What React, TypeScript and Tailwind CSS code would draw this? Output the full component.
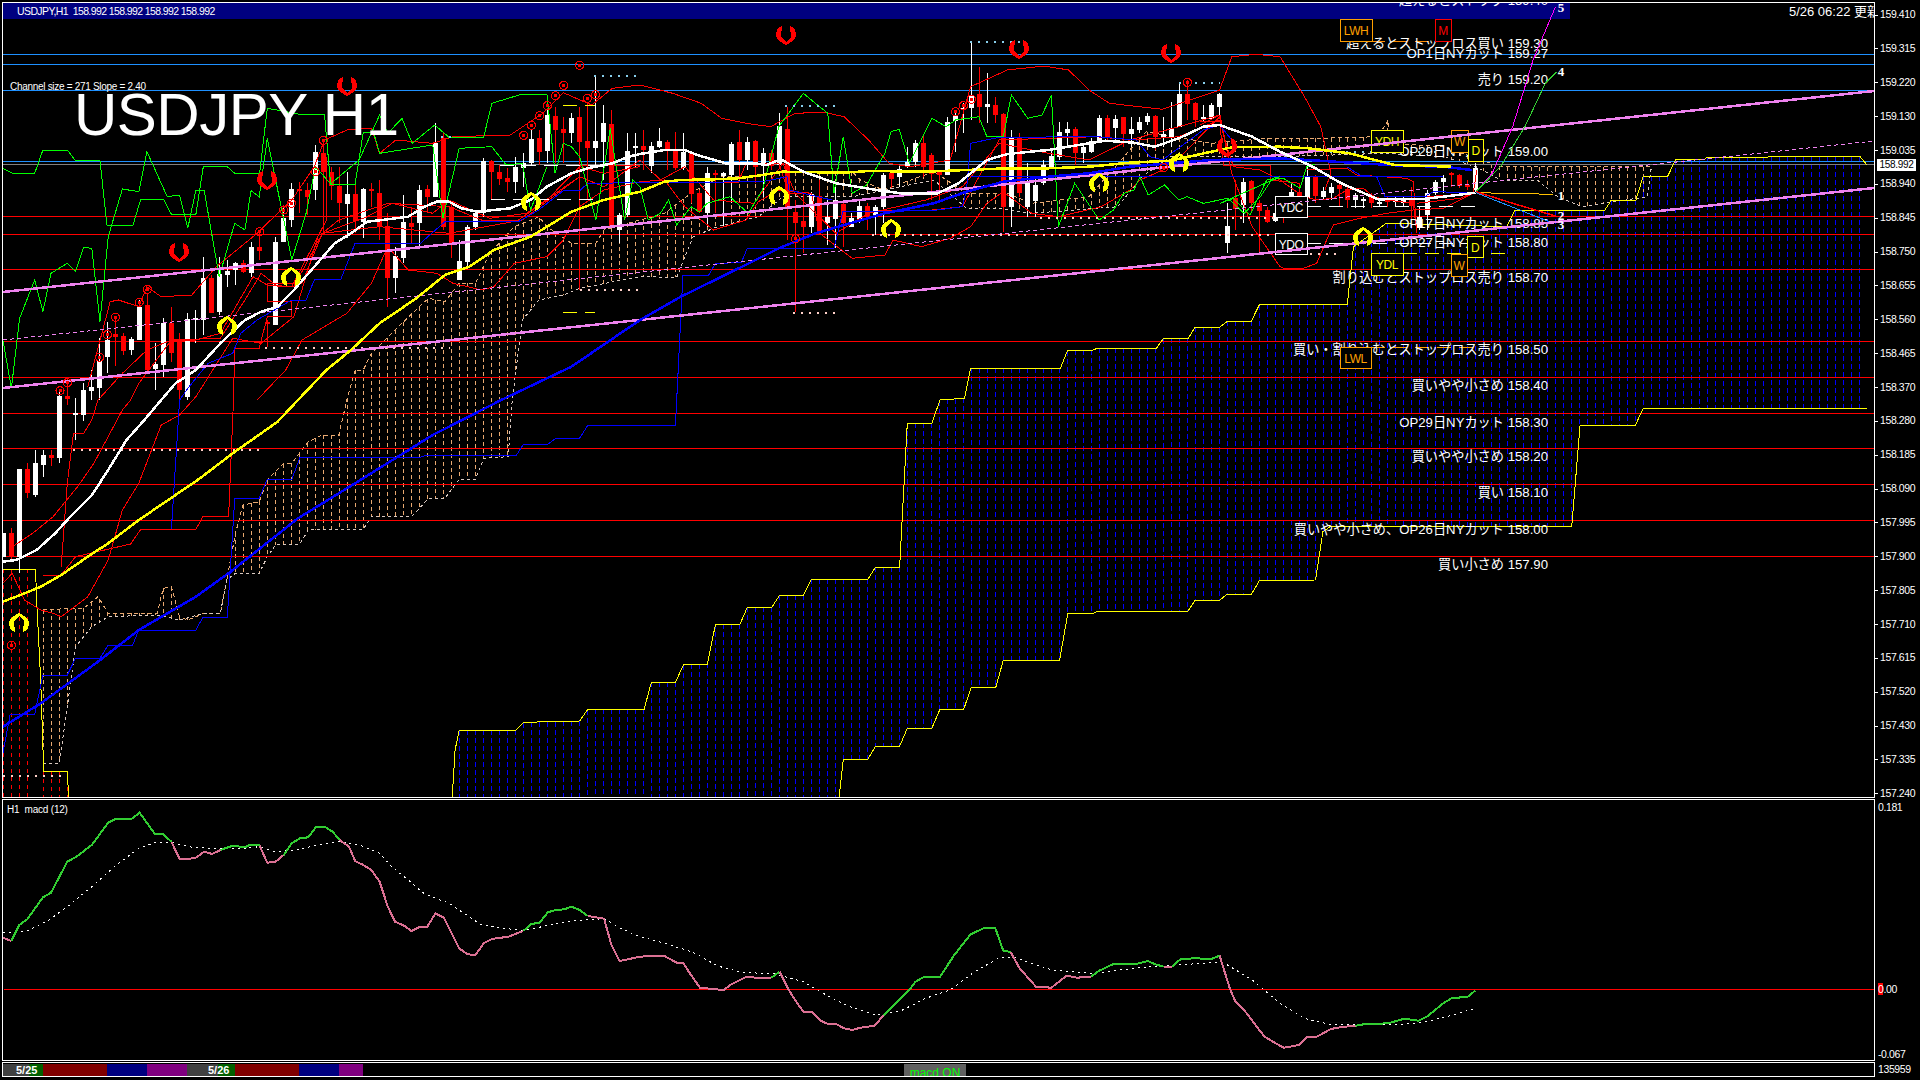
// App.tsx
const z = (ox: number, oy: number, s: string, sx = 2.45, sy = 3) =>
  s.trim().split(/\s+/).map((p) => {
    const [x, y] = p.split(',').map(Number)
    return `${(x / sx + ox).toFixed(1)},${(y / sy + oy).toFixed(1)}`
  }).join(' ')
const z9 = (s: string) => z(1200, 100, s, 3, 3)

const parse = (s: string) => s.split(' ').map((p) => p.split(',').map(Number))
const at = (pts: number[][], x: number) => {
  for (let i = 1; i < pts.length; i++) {
    if (x <= pts[i][0]) {
      const [a, b] = [pts[i - 1], pts[i]]
      return a[1] + ((b[1] - a[1]) * (x - a[0])) / Math.max(b[0] - a[0], 0.1)
    }
  }
  return pts[pts.length - 1][1]
}
const barX = (k: number) => 3.5 + 8 * k

// [red?, body top, body bottom, high, low] in 3x y units
const candles: number[][] = [
  [0,1600,1670,1600,1670],[1,1600,1672,1585,1680],[0,1407,1670,1407,1720],[1,1407,1480,1390,1495],[0,1390,1485,1350,1490],
  [0,1365,1395,1350,1430],[1,1365,1375,1350,1397],[0,1188,1375,1175,1390],[1,1188,1196,1130,1215],[0,1240,1246,1195,1320],
  [0,1170,1245,1150,1262],[0,1160,1172,1110,1200],[0,1082,1165,1015,1200],[0,1020,1070,965,1118],[1,1002,1010,950,1098],
  [1,1008,1052,1000,1065],[0,1018,1050,1010,1065],[0,920,1020,900,1020],[1,915,1110,880,1115],[0,1092,1108,1030,1170],
  [0,970,1095,955,1130],[1,970,1060,920,1085],[1,1022,1170,1000,1200],[0,958,1190,940,1200],[0,955,960,930,1030],
  [0,835,960,770,1005],[1,833,940,825,940],[0,822,935,770,945],[0,812,825,780,860],[0,790,810,785,855],
  [1,790,815,780,820],[0,740,820,725,830],[1,742,752,690,780],[1,965,970,960,1040],[0,725,975,710,975],
  [0,655,725,620,725],[0,568,660,550,680],[1,568,572,545,640],[1,570,592,550,645],[0,455,570,435,600],
  [1,460,515,430,700],[1,515,558,500,600],[1,558,610,500,670],[0,582,612,515,715],[1,582,662,555,700],
  [0,568,665,565,715],[1,568,572,550,620],[1,578,680,540,720],[1,678,835,640,920],[0,768,835,740,880],
  [0,665,775,585,790],[1,670,680,620,730],[0,570,670,555,740],[1,568,590,555,640],[0,430,590,370,590],
  [1,413,680,400,690],[1,620,728,610,775],[0,783,840,720,840],[0,680,785,675,800],[0,640,682,630,690],
  [0,483,640,475,650],[1,483,515,480,600],[1,515,538,495,555],[1,533,545,505,575],[0,500,545,470,580],
  [0,490,503,460,560],[0,417,490,390,495],[1,415,455,390,495],[0,345,452,330,490],[1,348,390,320,490],
  [1,388,398,350,490],[0,355,398,340,430],[1,352,425,320,870],[1,422,445,310,600],[0,423,445,225,500],
  [0,370,425,315,540],[1,372,680,330,680],[0,645,690,640,730],[0,452,645,400,650],[0,437,445,400,500],
  [1,437,450,390,510],[0,437,497,425,518],[0,423,442,385,445],[1,427,450,420,510],[1,450,503,395,510],
  [0,455,503,400,510],[1,460,582,460,610],[1,580,635,570,640],[0,520,640,500,680],[1,518,525,510,640],
  [0,520,528,515,680],[0,432,525,425,610],[1,427,480,390,530],[0,425,480,410,510],[1,423,500,420,550],
  [0,460,497,445,590],[1,460,498,450,510],[0,377,495,340,500],[1,388,620,320,720],[1,637,668,600,935],
  [1,662,680,590,760],[0,582,680,575,700],[1,587,695,540,700],[0,650,668,600,735],[0,600,657,560,745],
  [1,612,670,610,740],[0,655,680,640,680],[0,618,660,600,670],[1,618,650,610,690],[0,620,645,615,705],
  [0,525,620,520,670],[1,520,538,515,565],[0,508,530,495,560],[0,485,500,440,505],[0,430,487,420,500],
  [1,430,500,405,530],[1,465,522,460,600],[1,515,525,510,610],[0,365,525,350,525],[0,345,362,330,455],
  [0,325,330,310,400],[0,285,325,122,360],[1,282,320,200,370],[0,312,320,220,370],[1,315,345,290,370],
  [1,342,620,340,695],[0,412,620,390,680],[1,410,580,400,590],[0,550,620,490,650],[0,555,603,530,650],
  [0,495,550,480,555],[0,468,500,445,500],[0,397,470,365,480],[0,388,400,365,440],[1,388,460,380,495],
  [0,440,460,430,490],[0,423,457,415,460],[0,355,425,345,430],[1,355,410,345,420],[0,358,385,345,420],
  [1,352,402,350,440],[0,388,402,350,440],[0,367,390,350,400],[0,348,367,340,375],[1,348,410,345,450],
  [0,403,415,350,440],[0,385,410,305,440],[0,282,380,248,380],[1,282,312,240,360],[1,310,360,305,380],
  [0,352,358,315,365],[0,315,358,310,360],[0,282,320,280,345],[0,678,730,610,760],[1,595,628,540,690],
  [0,545,615,535,670],[1,542,608,540,640],[1,610,632,600,760],[1,630,665,620,670],[0,640,662,590,665],
  [1,642,650,610,670],[0,577,595,550,645],[1,577,592,550,650],[0,530,595,500,600],[1,528,588,525,610],
  [0,572,590,560,600],[0,560,578,550,600],[1,555,568,550,620],[1,568,600,562,625],[0,585,600,578,625],
  [0,596,600,590,625],[1,585,608,580,625],[0,605,608,600,620],[1,600,606,590,620],[0,598,605,590,620],
  [0,600,610,590,620],[1,600,618,560,660],[0,650,685,620,690],[0,580,645,570,690],[0,545,580,540,585],
  [0,535,545,525,580],[1,520,525,515,560],[1,525,558,522,565],[1,555,562,540,570],[0,505,570,490,575],
]

const blueLevels = [54, 64, 90, 161]
const redLevels = [216, 234, 269, 341, 377, 413, 448, 484, 520, 556]

const blueUpper = parse([
  z(0, 400, '1108,1190 1115,1050 1125,990 1265,990 1283,967 1350,965 1420,963 1440,928 1568,928'),
  z(640, 400, '10,928 28,847 87,847 107,793 165,793 185,673 245,673 263,622 323,622 342,586 400,586 420,538 558,538 577,502 636,502 655,70 715,70 735,0'),
  z(640, 0, '795,1195 810,1105 1030,1105 1048,1050 1110,1050 1120,1045 1265,1045 1283,1015 1343,1015 1360,982 1420,982 1440,963 1498,963 1518,913 1568,913'),
  z(1280, 0, '165,913 180,740 240,688 260,670 555,680 575,632 795,632 812,600 872,600 890,528 950,528 970,478 1040,478 1045,472 1195,472 1200,468 1420,468 1438,495'),
].join(' '))
const blueLower = parse([
  z(640, 400, '488,1190 498,1078 558,1078 577,1039 636,1039 655,985 715,985 735,928 793,928 812,861 872,861 890,781 1028,781 1048,640 1110,640 1120,634 1342,634 1360,601 1420,601 1438,583 1498,583 1518,541 1568,541'),
  z(1280, 340, '87,720 105,575 125,558 715,558 735,257 870,257 890,205 1438,205'),
].join(' '))
const blueUpperLine = blueUpper.map((p) => p.join(',')).join(' ')
const blueLowerLine = blueLower.map((p) => p.join(',')).join(' ')

const orangeUpperStr = [
  z(0, 400, '105,630 125,628 205,625 240,590 265,640 385,640 400,565 420,560 440,650 460,660 500,640 540,640 577,400 595,315 635,305 655,240 695,190 715,190 755,125 790,105 830,105 850,0'),
  z(0, 0, '870,1110 890,1110 910,1060 1010,940 1050,895 1090,905 1125,850 1165,850 1200,760 1260,680 1320,650 1340,680 1400,730 1460,730 1480,690 1568,660'),
  z(640, 0, '60,640 130,575 200,530 290,530 350,515 520,515 540,540 595,570 720,515 800,580 900,580 960,610 1100,590 1200,450 1240,395 1400,430 1540,415 1568,415'),
  z(1280, 0, '100,415 240,410 265,360 270,430 400,440 540,500 910,500'),
].join(' ')
const orangeLowerStr = [
  z(0, 400, '105,1090 145,1090 165,920 185,740 225,680 265,650 385,645 440,660 500,640 540,640 555,540 577,520 635,520 655,470 675,435 735,432 755,390 890,388 910,350 1010,348 1050,295 1090,295 1125,238 1165,238 1185,175 1245,170 1255,0'),
  z(0, 0, '1280,960 1320,900 1380,885 1420,865 1568,830'),
  z(640, 0, '90,832 130,710 190,680 290,650 350,590 520,590 600,570 720,540 800,625 880,625 960,640 1170,620 1230,530 1300,470 1568,470'),
  z(1280, 0, '260,460 400,470 480,500 540,540 630,540 680,590 740,620 900,590 910,500'),
].join(' ')
const orangeUpper = parse(orangeUpperStr)
const orangeLower = parse(orangeLowerStr)

const redThin = [
  [z(0, 0, '215,1160 270,905 290,900 340,920 360,860 395,890 470,885 530,800 630,700 680,640 715,600 770,500 795,420 850,390 910,385 930,460 970,420 1060,430 1110,410 1250,405 1330,340 1380,278 1450,315 1500,265 1568,255'),
    z(640, 0, '80,280 150,310 200,355 260,370 320,380 380,340 450,337 500,350 560,420 610,490 660,500 760,480 810,260 900,210 990,198 1050,210 1100,270 1150,310 1280,328 1420,270 1450,170 1510,163 1568,170'),
    z(1280, 0, '60,290 100,380 125,520 110,570')].join(' '),
  [z(0, 0, '630,1200 700,1110 740,1020 850,940 910,850 950,740 1000,810 1070,820 1110,850 1180,870 1210,860 1260,790 1340,770 1380,720 1420,620 1480,570 1568,545'),
    z(640, 0, '60,540 110,620 180,690 260,660 290,605 340,570 420,580 440,700 520,775 600,765 620,720 690,740 760,715 810,680 850,610 890,575 960,640 1025,650 1130,620 1200,570 1225,540 1300,500 1420,350 1450,520 1500,680 1568,800'),
    z9('250,505 310,505 350,490 380,420 400,375 480,355 560,340 640,330 730,325 820,280')].join(' '),
  [z(0, 400, '150,650 215,590 265,480 300,330 340,250 395,75 440,45'),
    z(0, 0, '480,1190 570,1015 640,1030 720,950 780,705 900,650 960,610 1060,640 1100,600 1200,655 1290,640 1420,530 1480,560 1568,480'),
    z(640, 0, '50,540 110,500 180,600 280,610 350,490 380,580 480,700 560,640 700,600 790,560 880,430 1000,460 1100,480 1200,420 1320,380 1420,345')].join(' '),
  [z(0, 400, '30,440 80,400 130,350 190,260 230,190 300,30 320,0'),
    z(0, 0, '340,1150 420,1020 540,1015 600,900 640,820 680,860 720,860 790,700 830,660 950,610 1100,620 1180,660 1270,660 1340,600 1420,500 1480,520 1568,500')].join(' '),
  [z(0, 400, '150,500 165,250 180,100 205,100 225,60 240,0'),
    z(0, 0, '300,1120 360,1050 420,1020 480,1020 540,1000 620,830 655,855 715,860 800,660 800,470')].join(' '),
  [z(0, 400, '105,525 150,525 185,470 320,432 345,388 480,388 497,350 560,350 572,0'),
    z(0, 0, '575,1045 635,1045 655,950 715,950 715,905 655,905 655,850 740,850 790,700 930,680 1100,700 1280,660 1420,530 1420,495 1568,495')].join(' '),
  z(640, 0, '0,548 240,548 260,490 340,490 365,580 400,580 400,760'),
  z(640, 0, '497,635 715,630 790,620 880,420 1115,410 1210,420 1320,410 1420,360'),
  z(0, 400, '7,550 30,520 60,600 100,630 130,640 150,650'),
  z9('0,75 60,45 75,120 100,200 180,210 240,240 310,290 350,300 400,295 440,270 490,265 520,290 560,300 640,310 650,395'),
  z9('0,65 60,65 70,195 210,195 210,240 300,250'),
  z9('320,210 440,205 470,225 545,230 620,235 640,245 650,400'),
  z9('640,290 680,290 820,280 830,210'),
  z9('650,310 780,295 820,278'),
]

const blueThin = [
  [z(0, 400, '7,1060 25,943 85,943 105,825 165,825 185,775 245,775 265,735 325,735 340,690 480,690 497,652 557,652 575,295 635,295 655,238 715,238 735,172 1030,172 1045,166 1265,166 1283,132 1343,132 1362,115 1420,115 1440,76 1568,76'),
    z(640, 400, '87,76 90,0'), z(640, 0, '105,826 168,826 185,790 248,788 263,745 475,745 497,635 715,632 790,620 800,570 810,430 880,412 1120,410 1215,420 1250,470 1280,480 1380,390 1420,375 1450,420')].join(' '),
  [z(0, 400, '420,388 440,0'), z(0, 0, '460,1165 510,1090 570,1060 590,1000 630,960 715,900 750,900 770,840 835,838 870,730 1030,730 1090,665 1270,665 1320,630 1380,572 1420,572 1440,550 1568,548'),
    z(640, 0, '300,545 360,530 365,570 470,600')].join(' '),
  z(640, 0, '810,530 1568,530'),
  z(1280, 0, '0,528 400,528'),
  z9('440,200 480,225 530,230 555,290 680,290 680,285 700,275 820,278'),
]

const greenThin = [
  z(0, 0, '7,505 30,520 85,520 105,450 165,450 185,482 245,482 262,675 325,678 345,597 400,597 420,643 480,643 498,500 557,500 575,520 636,520 655,325 735,343 795,343 810,552 870,552 890,397 915,397 930,460 1060,435 1085,655 1125,445 1205,440 1240,495 1280,490 1300,630 1340,500'),
  [z(0, 0, '7,1020 28,1165 48,955 85,840 105,935 125,820 165,790 185,815 205,742 225,745 245,965 265,710 300,567 340,575 360,455 410,590 440,585 460,685 480,570 500,570 537,830 575,670 600,690 615,572 635,590 655,415 715,780 750,640 773,500 810,552 850,510 880,480 930,345 950,400 985,355 1010,430 1065,375 1100,412 1185,412 1205,310 1280,282 1340,282 1360,520 1380,430 1400,440 1420,470 1460,660 1495,385 1530,660 1550,540 1568,560'),
    z(640, 0, '20,660 50,640 70,600 90,675 125,620 145,635 165,610 220,590 265,640 300,570 340,380 400,280 440,320 460,340 475,580 498,410 520,580 555,555 600,460 615,395 635,388 660,490 715,355 750,380 773,360 830,350 850,410 890,410 910,285 950,355 985,345 1008,285 1025,680 1065,550 1125,660 1160,630 1185,580 1210,570 1225,530 1245,585 1285,555 1320,600 1340,590 1380,610 1440,595 1480,640 1520,590 1550,535 1568,530'),
    z9('60,310 100,295 150,345 200,240 250,235 300,265 320,200 345,192')].join(' '),
]

const yellowMa = [
  z(0, 400, '7,605 50,585 100,560 150,525 215,470 265,430 340,360 430,285 490,235 570,160 640,100 680,65 730,0'),
  z(0, 0, '800,1110 860,1050 930,970 1020,895 1090,825 1150,800 1210,750 1300,710 1400,635 1479,600 1568,575'),
  z(640, 0, '60,545 100,540 180,538 240,535 300,525 350,515 500,518 560,513 700,515 800,510 900,505 1000,505 1100,500 1200,488 1300,482 1400,455 1450,442 1568,440'),
  z(1280, 0, '70,445 170,460 280,495 420,500'),
].join(' ')
const whiteMa = [
  z(0, 400, '7,485 40,480 90,450 135,400 180,340 225,285 260,220 310,120 350,65 395,0'),
  z(0, 0, '430,1150 480,1110 540,1030 600,960 640,935 680,920 720,870 770,800 820,730 860,700 900,665 950,658 1000,650 1040,620 1070,605 1100,605 1130,625 1170,635 1250,625 1300,600 1340,560 1400,520 1440,505 1500,490 1540,470 1568,462'),
  z(640, 0, '60,450 110,450 140,465 210,490 280,490 310,495 345,478 400,515 480,550 580,570 640,580 730,580 780,550 850,480 900,462 1000,450 1100,430 1140,422 1210,428 1260,440 1320,415 1380,380 1420,375 1500,410 1568,455'),
  z(1280, 0, '80,500 150,550 240,598 350,597 400,590 479,578'),
].join(' ')
const blueMa = [
  z(0, 400, '7,980 100,910 240,785 340,690 480,590 565,515 730,355 870,250 1060,105 1228,0'),
  z(0, 0, '1400,1100 1568,960'),
  z(640, 0, '100,890 250,800 340,745 430,700 500,675 600,640 720,610 800,575 890,545 1000,530 1100,520 1200,500 1300,490 1400,480 1568,475'),
  z(1280, 0, '200,490 300,497 400,500 470,510'),
].join(' ')

const dots: [string, number, number, number][] = [
  ['#87ceeb', 594, 640, 75], ['#87ceeb', 441, 451, 136], ['#87ceeb', 970, 1026, 41], ['#87ceeb', 785, 835, 105], ['#87ceeb', 1179, 1220, 82],
  ['#87ceeb', 1330, 1440, 151],
  ['#ffd0c8', 73, 260, 449], ['#ffd0c8', 265, 450, 347], ['#ffd0c8', 580, 640, 289], ['#ffd0c8', 793, 835, 312], ['#ffd0c8', 1040, 1280, 217],
  ['#ffd0c8', 872, 1030, 234], ['#ffd0c8', 1035, 1280, 234], ['#ffd0c8', 1310, 1340, 253], ['#ffd0c8', 3, 67, 775],
]
const dashes: [string, number, number, number][] = [
  ['#ffffff', 491, 595, 199], ['#ffffff', 500, 595, 165], ['#ffff00', 563, 595, 105], ['#ffff00', 563, 595, 312],
  ['#ffffff', 1307, 1477, 206], ['#ffffff', 1307, 1477, 243], ['#ffff00', 1403, 1507, 253], ['#ff8c00', 1371, 1435, 41], ['#ffa000', 1371, 1480, 347],
]

const upMarks = '147,1172 165,1148 244,1072 263,1004 283,952 341,907 361,868 636,695 695,630 714,610 773,515 792,421 1283,406 1302,376 1322,347 1341,317 1361,287 1381,256 1420,196 1439,295 1459,284'
const rings = [
  ...parse(z(0, 0, upMarks)),
  ...parse(z(0, 400, '28,736')),
  ...parse(z(640, 0, '381,716 773,335 792,317 812,298 1341,247 1283,503')),
]
const redShoes = [[347, 86], [179, 252], [267, 180], [786, 35], [1019, 49], [1171, 53], [1227, 147]]
const yellowShoes = [[227, 326], [291, 277], [531, 202], [19, 623], [779, 196], [891, 229], [1099, 183], [1179, 163], [1363, 237]]

const boxes: [string, string, number, number, number, number][] = [
  ['LWH', '#ffa000', 1340, 19, 32, 22], ['M', '#ff0000', 1435, 19, 16, 22], ['YDH', '#ffff00', 1371, 130, 32, 22],
  ['W', '#ffa000', 1451, 130, 17, 22], ['D', '#ffff00', 1468, 139, 15, 22], ['YDC', '#ffffff', 1275, 196, 32, 21],
  ['YDO', '#ffffff', 1275, 233, 32, 21], ['D', '#ffff00', 1467, 236, 16, 21], ['W', '#ffa000', 1451, 254, 16, 22],
  ['YDL', '#ffff00', 1371, 253, 32, 22], ['LWL', '#ffa000', 1340, 347, 31, 21],
]
const levels: [string, number][] = [
  ['超えるとストップ 159.40', 0], ['超えるとストップロス買い 159.30', 43], ['OP1日NYカット 159.27', 53], ['売り 159.20', 79],
  ['OP29日NYカット 159.00', 151], ['OP17日NYカット 158.85', 223], ['OP27日NYカット 158.80', 242],
  ['割り込むとストップロス売り 158.70', 277], ['買い・割り込むとストップロス売り 158.50', 349], ['買いやや小さめ 158.40', 385],
  ['OP29日NYカット 158.30', 422], ['買いやや小さめ 158.20', 456], ['買い 158.10', 492],
  ['買いやや小さめ、OP26日NYカット 158.00', 529], ['買い小さめ 157.90', 564],
]
const wave: [string, number][] = [['5', 7], ['4', 71], ['1', 195], ['2', 215], ['3', 224]]

const prices = ['159.410','159.315','159.220','159.130','159.035','158.940','158.845','158.750','158.655','158.560','158.465','158.370','158.280','158.185','158.090','157.995','157.900','157.805','157.710','157.615','157.520','157.430','157.335','157.240']

const green = '#32cd32'
const pink = '#db7093'
const macd: [string, string][] = [
  [pink, z(0, 780, '7,473 28,483')],
  [green, z(0, 780, '28,483 47,435 67,418 105,352 125,338 165,245 185,232 225,195 265,128 283,117 322,117 342,98 380,163 400,163 420,185')],
  [pink, z(0, 780, '420,185 440,237 460,237 480,233 500,215 520,222 540,210')],
  [green, z(0, 780, '540,210 570,197 600,202 612,194 636,194')],
  [pink, z(0, 780, '636,197 655,248 675,245 695,225')],
  [green, z(0, 780, '695,225 715,190 735,175 755,172 775,140 795,140 815,155 832,180')],
  [pink, z(0, 780, '832,180 855,200 870,243 890,255 910,270 930,305 950,380 968,425 990,437 1008,453 1030,440 1047,440 1067,400 1087,413 1105,455 1125,505 1145,523 1165,525 1185,490 1205,477 1245,470 1282,453')],
  [green, z(0, 780, '1282,453 1302,432 1322,428 1342,397 1362,390 1382,388 1400,380 1420,390 1440,408')],
  [pink, z(0, 780, '1440,408 1480,416 1498,495 1518,543 1568,530') + ' ' + z(640, 780, '30,528 60,528 90,548 105,548 125,585 147,623 185,628 205,630 225,612 262,590 285,593 322,593')],
  [green, z(640, 780, '322,593 342,575')],
  [pink, z(640, 780, '342,575 362,625 380,660 400,695 420,695 440,720 460,732 480,732 500,745 520,750 540,743 575,737 597,705')],
  [green, z(640, 780, '597,705 660,630 675,605 697,590 735,590 770,525 810,463 845,443 870,443 890,512 908,516')],
  [pink, z(640, 780, '908,516 930,565 970,620 1008,623 1045,587 1070,593 1105,590')],
  [green, z(640, 780, '1105,590 1125,572 1160,552 1215,552 1245,543 1260,552 1283,560')],
  [pink, z(640, 780, '1283,560 1303,560')],
  [green, z(640, 780, '1303,560 1325,537 1360,535 1400,537 1420,527')],
  [pink, z(640, 780, '1420,527 1445,625 1458,663 1480,690 1530,770 1568,797') + ' ' + z(1280, 780, '10,803 47,795 67,770 90,770 125,747 150,741 185,737')],
  [green, z(1280, 780, '185,737 205,733 265,730 305,716 340,722 360,710 400,670 420,655 460,650 478,632')],
]
const signal = [
  z(0, 780, '7,458 67,452 120,420 170,375 230,315 280,260 340,205 380,188 420,187 470,202 540,207 600,205 635,200 675,215 720,210 780,195 830,183 880,195 930,220 960,260 1000,300 1040,342 1100,370 1180,435 1280,452 1340,437 1400,422 1480,416 1520,445 1568,470'),
  z(640, 780, '60,490 130,517 190,558 250,577 330,582 400,605 460,648 520,683 580,705 640,692 700,655 760,630 820,575 880,533 920,533 1010,570 1110,580 1230,562 1400,548 1430,548 1500,600 1568,670'),
  z(1280, 780, '60,715 120,733 300,733 360,725 430,703 478,685'),
].join(' ')

function Shoe({ x, y, color, flip }: { x: number; y: number; color: string; flip?: boolean }) {
  return (
    <path
      transform={`translate(${x} ${y}) scale(1 ${flip ? -1 : 1})`}
      fill={color}
      d="M-4,-9 C-8,-8 -10,-4 -10,0 C-10,5 -5,7 0,10 C5,7 10,5 10,0 C10,-4 8,-8 4,-9 L5,2 L0,7 L-5,2 Z"
    />
  )
}

function MainChart() {
  const bars = Array.from({ length: 233 }, (_, k) => barX(k))
  return (
    <svg className="absolute inset-0 w-full h-full" viewBox="3 3 1871 794" shapeRendering="crispEdges" fill="none">
      {bars.filter((x) => x <= 32 || (x > 40 && x < 70)).map((x) => (
        <line key={x} x1={x} x2={x} y1={x <= 32 ? 569 : 771} y2={797} stroke="#ff0000" strokeDasharray="4 4" />
      ))}
      {bars.filter((x) => x > 43 && x < 1652).map((x) => (
        <line key={x} x1={x} x2={x} y1={at(orangeUpper, x)} y2={at(orangeLower, x)} stroke="#e8a870" strokeDasharray="4 3" />
      ))}
      {bars.filter((x) => x > 452 && x < 1868).map((x) => (
        <line key={x} x1={x} x2={x} y1={at(blueUpper, x)} y2={x < 839 ? 797 : at(blueLower, x)} stroke="#0000ff" strokeDasharray="5 3" />
      ))}
      <polyline points={orangeUpperStr} stroke="#e8a870" strokeDasharray="4 3" />
      <polyline points={orangeLowerStr} stroke="#d8c8c0" strokeDasharray="3 3" />

      {blueLevels.map((y) => <line key={y} x1={3} x2={1874} y1={y + 0.5} y2={y + 0.5} stroke="#1e90ff" />)}
      <line x1={3} x2={1874} y1={164.5} y2={164.5} stroke="#808080" />
      {redLevels.map((y) => <line key={y} x1={3} x2={1874} y1={y + 0.5} y2={y + 0.5} stroke="#ff0000" />)}

      <polyline points={blueUpperLine} stroke="#ffff00" />
      <polyline points={blueLowerLine} stroke="#ffff00" />
      <polyline points={z(0, 400, '7,508 87,508 90,600 100,850 107,1113 165,1113 168,1190')} stroke="#ffff00" />

      {candles.map(([red, top, bot, hi, lo], k) => {
        const x = Math.floor(barX(k)) + 0.5
        const color = red ? '#ff0000' : '#ffffff'
        return (
          <g key={k}>
            <line x1={x} x2={x} y1={hi / 3} y2={lo / 3} stroke={color} />
            <rect x={x - 2.5} y={top / 3} width={5} height={Math.max((bot - top) / 3, 2)} fill={color} />
          </g>
        )
      })}

      {redThin.map((p, i) => <polyline key={i} points={p} stroke="#ff0000" />)}
      {blueThin.map((p, i) => <polyline key={i} points={p} stroke="#0000ff" />)}
      {greenThin.map((p, i) => <polyline key={i} points={p} stroke="#00ff00" />)}

      {dots.map(([c, a, b, y], i) => <line key={i} x1={a} x2={b} y1={y + 0.5} y2={y + 0.5} stroke={c} strokeWidth={2} strokeDasharray="2 6" />)}
      {dashes.map(([c, a, b, y], i) => <line key={i} x1={a} x2={b} y1={y + 0.5} y2={y + 0.5} stroke={c} strokeDasharray="14 8" />)}

      {levels.map(([t, y]) => (
        <text key={y} x={1548} y={y} fill="#ffffff" textAnchor="end" dominantBaseline="central" className="text-[13.2px]">{t}</text>
      ))}
      {boxes.map(([t, c, x, y, w, h], i) => (
        <g key={i}>
          <rect x={x + 0.5} y={y + 0.5} width={w} height={h} stroke={c} fill="#000000" />
          <text x={x + w / 2} y={y + h / 2 + 1} fill={c} textAnchor="middle" dominantBaseline="central" className="text-[12px] tracking-[-0.5px]">{t}</text>
        </g>
      ))}

      <line x1={3} y1={292} x2={1874} y2={91} stroke="#ee82ee" strokeWidth={2.5} />
      <line x1={3} y1={388} x2={1874} y2={188} stroke="#ee82ee" strokeWidth={2.5} />
      <line x1={3} y1={340} x2={1874} y2={141} stroke="#ee82ee" strokeDasharray="4 3" />

      <polyline points={blueMa} stroke="#0000ff" strokeWidth={2.5} />
      <polyline points={yellowMa} stroke="#ffff00" strokeWidth={2.5} />
      <polyline points={whiteMa} stroke="#ffffff" strokeWidth={2.5} />

      <polyline points={z(1280, 0, '480,575 520,520 570,380 620,180 675,20')} stroke="#ff00ff" />
      <polyline points={z(1280, 0, '480,575 540,500 600,380 650,250 678,215')} stroke="#32cd32" />
      <polyline points={z(1280, 0, '480,578 670,583')} stroke="#ffc000" />
      <polyline points={z(1280, 0, '480,575 570,610 680,650')} stroke="#ff0000" strokeWidth={1.5} />
      <polyline points={z(1280, 0, '480,578 660,665')} stroke="#1e90ff" />

      {rings.map(([x, y], i) => (
        <g key={i}>
          <circle cx={x} cy={y} r={4} stroke="#ff0000" strokeWidth={1.2} />
          <rect x={x - 1.5} y={y - 1.5} width={3} height={3} fill="#ff0000" />
        </g>
      ))}
      {redShoes.map(([x, y]) => <Shoe key={x} x={x} y={y} color="#ff0000" />)}
      {yellowShoes.map(([x, y]) => <Shoe key={x} x={x} y={y} color="#ffff00" flip />)}

      {wave.map(([t, y]) => (
        <text key={t} x={1561} y={y} fill="#ffffff" textAnchor="middle" dominantBaseline="central" className="text-[13px] font-bold [font-family:'Liberation_Serif',serif]">{t}</text>
      ))}
    </svg>
  )
}

function MacdChart() {
  return (
    <svg className="absolute inset-0 w-full h-full" viewBox="3 800 1871 260" shapeRendering="crispEdges" fill="none">
      <line x1={4} x2={1874} y1={989.5} y2={989.5} stroke="#ff0000" />
      <polyline points={signal} stroke="#ffffff" strokeDasharray="2 4" />
      {macd.map(([c, p], i) => <polyline key={i} points={p} stroke={c} strokeWidth={2} />)}
    </svg>
  )
}

export default function App() {
  return (
    <div className="w-[1920px] h-[1080px] overflow-hidden bg-black text-white pt-[2px] flex flex-col gap-px [font-family:'Liberation_Sans','Noto_Sans_CJK_JP',sans-serif]">
      <div className="flex h-[796px] pl-[2px] shrink-0">
        <div className="relative w-[1873px] border border-white overflow-hidden">
          <div className="h-[16px] w-[1567px] bg-[#000080] pl-[14px] text-[10.5px] leading-[16px] whitespace-pre tracking-[-0.6px]">USDJPY,H1  158.992 158.992 158.992 158.992</div>
          <MainChart />
          <div className="absolute -right-[6px] top-[1px] text-[13px] leading-[16px] whitespace-nowrap">5/26 06:22 更新</div>
          <div className="absolute left-[7px] top-[77px] text-[10px] leading-[14px] whitespace-pre tracking-[-0.3px]">Channel size = 271 Slope = 2.40</div>
          <div className="absolute left-[71px] top-[78px] text-[60px] leading-[68px] whitespace-nowrap tracking-[-0.5px]">USDJPY H1</div>
        </div>
        <div className="relative flex-1 h-[798px] flex flex-col justify-between pt-[7px]">
          {prices.map((p) => (
            <div key={p} className="flex items-center gap-[2px] h-[12px] text-[10.5px] tracking-[-0.4px]">
              <span className="w-[3px] h-px bg-white" />
              <span>{p}</span>
            </div>
          ))}
          <div className="absolute left-[2px] top-[157px] w-[39px] h-[12px] bg-white text-black text-[10px] leading-[12px] text-center tracking-[-0.3px]">158.992</div>
        </div>
      </div>

      <div className="flex h-[262px] pl-[2px] shrink-0">
        <div className="relative w-[1873px] border border-white overflow-hidden">
          <div className="absolute left-[4px] top-[3px] text-[10px] leading-[13px] whitespace-pre tracking-[-0.2px]">H1  macd (12)</div>
          <MacdChart />
        </div>
        <div className="flex-1 flex flex-col pl-[3px] pt-[2px] text-[10.5px] leading-[12px] tracking-[-0.4px]">
          <span>0.181</span>
          <span className="relative mt-[170px]"><span className="absolute left-0 top-0 w-[5px] h-[12px] bg-[#ff0000]" /><span className="relative">0.00</span></span>
          <span className="mt-[53px]">-0.067</span>
        </div>
      </div>

      <div className="flex h-[15px] pl-[2px] shrink-0">
        <div className="relative w-[1873px] border border-white flex items-stretch pt-[1px] overflow-hidden text-[11px] leading-[13px]">
          <div className="relative flex h-full">
            <div className="w-[26px] bg-[#404040]" />
            <div className="w-[14px] bg-[#006000]" />
            <span className="absolute left-[13px] top-0 font-bold">5/25</span>
          </div>
          <div className="w-[64px] bg-[#800000]" />
          <div className="w-[40px] bg-[#000080]" />
          <div className="w-[40px] bg-[#800080]" />
          <div className="relative flex h-full">
            <div className="w-[31px] bg-[#404040]" />
            <div className="w-[17px] bg-[#006000]" />
            <span className="absolute left-[21px] top-0 font-bold">5/26</span>
          </div>
          <div className="w-[64px] bg-[#800000]" />
          <div className="w-[40px] bg-[#000080]" />
          <div className="w-[24px] bg-[#800080]" />
          <div className="ml-[541px] w-[62px] bg-[#606060] text-[#00ff00] text-center text-[12px] leading-[18px] overflow-hidden">macd ON</div>
        </div>
        <div className="pl-[3px] text-[10.5px] leading-[15px] tracking-[-0.4px]">135959</div>
      </div>
    </div>
  )
}
